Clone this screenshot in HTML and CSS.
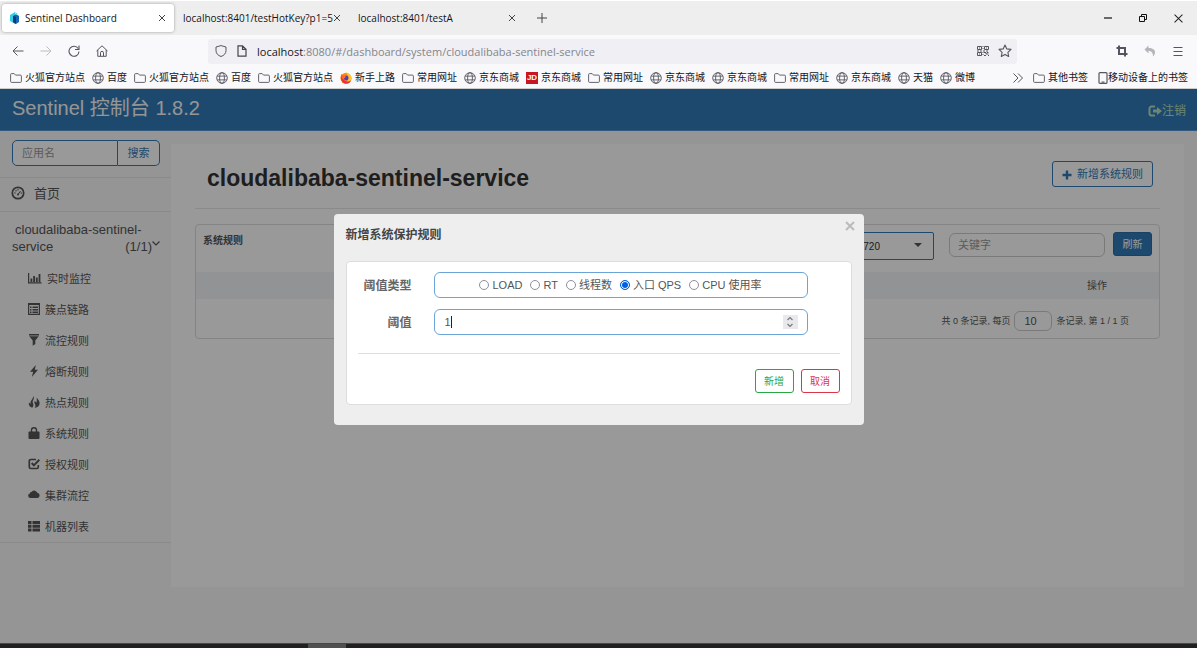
FILE: index.html
```html
<!DOCTYPE html>
<html lang="zh-CN">
<head>
<meta charset="utf-8">
<title>Sentinel Dashboard</title>
<link rel="stylesheet" href="styles.css">
</head>
<body>
<svg class="sprite" aria-hidden="true">
  <symbol id="i-close" viewBox="0 0 8 8"><path d="M1 1l6 6M7 1L1 7" fill="none" stroke="currentColor"/></symbol>
  <symbol id="i-folder" viewBox="0 0 12 12"><path d="M.6 2.6a1 1 0 0 1 1-1h2.6l1.3 1.5h4.9a1 1 0 0 1 1 1v5.3a1 1 0 0 1-1 1H1.6a1 1 0 0 1-1-1z" fill="none" stroke="currentColor" stroke-width=".9"/></symbol>
  <symbol id="i-globe" viewBox="0 0 12 12"><g fill="none" stroke="currentColor" stroke-width=".9"><circle cx="6" cy="6" r="5.3"/><ellipse cx="6" cy="6" rx="2.4" ry="5.3"/><path d="M1.2 4.1h9.6M1.2 7.9h9.6"/></g></symbol>
</svg>

<header class="browser">
  <div class="tabs">
    <div class="tab tab-active">
      <svg class="favicon" viewBox="0 0 10 12"><path d="M0 3l5-3v12L0 9z" fill="#35d0e8"/><path d="M3 4l3-2 3 2v6l-3 2-3-2z" fill="#1765b5"/><path d="M3 4l3 1v7l-3-2z" fill="#0b3a7e"/><path d="M5 0l3 2-2 1z" fill="#56e0e0"/></svg>
      <span class="tab-title">Sentinel Dashboard</span>
      <button class="icon-btn" aria-label="关闭标签页"><svg class="s8"><use href="#i-close"/></svg></button>
    </div>
    <div class="tab">
      <span class="tab-title">localhost:8401/testHotKey?p1=5</span>
      <button class="icon-btn" aria-label="关闭标签页"><svg class="s8"><use href="#i-close"/></svg></button>
    </div>
    <div class="tab">
      <span class="tab-title">localhost:8401/testA</span>
      <button class="icon-btn" aria-label="关闭标签页"><svg class="s8"><use href="#i-close"/></svg></button>
    </div>
    <button class="icon-btn new-tab" aria-label="新标签页"><svg class="s10" viewBox="0 0 10 10"><path d="M5 0v10M0 5h10" stroke="#444" fill="none"/></svg></button>
    <div class="window-controls">
      <button class="icon-btn" aria-label="最小化"><svg class="s8" viewBox="0 0 8 8"><path d="M0 4h8" stroke="#111" stroke-width="1.2"/></svg></button>
      <button class="icon-btn" aria-label="还原"><svg class="s8" viewBox="0 0 8 8"><path d="M.5 2.5h5v5h-5zM2.5 2.500V.5h5v5h-2" stroke="#111" fill="none"/></svg></button>
      <button class="icon-btn" aria-label="关闭"><svg class="s9" viewBox="0 0 8 8"><path d="M.5.5l7 7M7.500.5l-7 7" stroke="#222" stroke-width=".9"/></svg></button>
    </div>
  </div>

  <div class="toolbar">
    <div class="nav-buttons">
      <button class="icon-btn" aria-label="后退"><svg class="s12" viewBox="0 0 12 12"><path d="M11.500 6H1M5.500 1.500L1 6l4.500 4.500" fill="none" stroke="#555560"/></svg></button>
      <button class="icon-btn" aria-label="前进"><svg class="s12" viewBox="0 0 12 12"><path d="M.5 6H11M6.500 1.500L11 6l-4.500 4.500" fill="none" stroke="#bbbbc2"/></svg></button>
      <button class="icon-btn" aria-label="刷新页面"><svg class="s12" viewBox="0 0 12 12"><path d="M10.200 3.500A5 5 0 1 0 11 6.500M11 .5v4H7" fill="none" stroke="#55555f" stroke-width="1.100"/></svg></button>
      <button class="icon-btn" aria-label="主页"><svg class="s12" viewBox="0 0 12 12"><path d="M.5 6L6 .8 11.500 6M1.800 5v6.300h8.400V5M4.500 11V7.800a1.500 1.500 0 0 1 3 0V11" fill="none" stroke="#55555f"/></svg></button>
    </div>
    <div class="address">
      <svg class="s12" viewBox="0 0 12 12"><path d="M6 .6l5 1.400v3.500C11 8.500 9 10.500 6 11.500 3 10.500 1 8.500 1 5.500V2z" fill="none" stroke="#55555f"/></svg>
      <svg class="s12" viewBox="0 0 12 12"><path d="M2 .8h4.500L10 4.200v7H2zM6.500.8v3.500H10" fill="none" stroke="#44444f" stroke-width="1.200"/></svg>
      <span class="url"><b>localhost</b>:8080/#/dashboard/system/cloudalibaba-sentinel-service</span>
      <svg class="s12" viewBox="0 0 12 12"><g fill="none" stroke="#55555f"><path d="M.5 1.500h4v3h-4zM7.500 1.500h4v3h-4zM.5 7.500h4v3h-4zM7 7.500h2v1.500h2.500M7 10.500h2M11 10.500h1"/><path d="M2 3h1M9 3h1M2 9h1M10 7.500h1.500M0 6h12" stroke-dasharray="2 1"/><path d="M6 1v4M6 7v4" stroke-dasharray="1 1"/></g></svg>
      <svg class="s14 star" viewBox="0 0 14 14"><path d="M7 1l1.800 3.900 4.200.5-3.100 2.900.8 4.200L7 10.400l-3.700 2.100.8-4.200L1 5.400l4.200-.5z" fill="none" stroke="#55555f" stroke-width="1.100" stroke-linejoin="round"/></svg>
    </div>
    <div class="tool-buttons">
      <button class="icon-btn" aria-label="截图"><svg class="s12" viewBox="0 0 12 12"><path d="M3 .5V9h8.500M.5 3H9v8.500" fill="none" stroke="#55555f" stroke-width="2"/></svg></button>
      <button class="icon-btn" aria-label="撤销"><svg class="s12" viewBox="0 0 12 12"><path d="M4.500.5L.5 4.500l4 4V6c3 0 4.500 1.500 4.500 5.500C13 7 11 3 4.500 3z" fill="#b5b5bb"/></svg></button>
      <button class="icon-btn" aria-label="菜单"><svg class="s12" viewBox="0 0 12 12"><path d="M1.500 2.500h9M1.500 6.500h9M1.500 10.500h9" stroke="#55555f"/></svg></button>
    </div>
  </div>

  <nav class="bookmarks">
    <a href="#"><svg class="s12"><use href="#i-folder"/></svg>火狐官方站点</a>
    <a href="#"><svg class="s12"><use href="#i-globe"/></svg>百度</a>
    <a href="#"><svg class="s12"><use href="#i-folder"/></svg>火狐官方站点</a>
    <a href="#"><svg class="s12"><use href="#i-globe"/></svg>百度</a>
    <a href="#"><svg class="s12"><use href="#i-folder"/></svg>火狐官方站点</a>
    <a href="#"><svg class="s12" viewBox="0 0 12 12"><circle cx="6" cy="6.300" r="5.500" fill="#ff8a16"/><path d="M6 .5c4 1 6 4 5.300 7C10.500 10.500 8 12 5 11.700 9 10 9 4 6 .5z" fill="#ffc62a"/><path d="M1 3C.2 7 2 11.500 6 11.800c2.500 0 4.500-1.500 5-3.500-3 2.500-8 1-8-3L1 3z" fill="#ee2f3c"/><circle cx="6.200" cy="6" r="2.400" fill="#5b3bb4"/><path d="M1 2l3 1.500 2 .5-1 2-3 1z" fill="#ff6a1a"/></svg>新手上路</a>
    <a href="#"><svg class="s12"><use href="#i-folder"/></svg>常用网址</a>
    <a href="#"><svg class="s12"><use href="#i-globe"/></svg>京东商城</a>
    <a href="#"><span class="jd">JD</span>京东商城</a>
    <a href="#"><svg class="s12"><use href="#i-folder"/></svg>常用网址</a>
    <a href="#"><svg class="s12"><use href="#i-globe"/></svg>京东商城</a>
    <a href="#"><svg class="s12"><use href="#i-globe"/></svg>京东商城</a>
    <a href="#"><svg class="s12"><use href="#i-folder"/></svg>常用网址</a>
    <a href="#"><svg class="s12"><use href="#i-globe"/></svg>京东商城</a>
    <a href="#"><svg class="s12"><use href="#i-globe"/></svg>天猫</a>
    <a href="#"><svg class="s12"><use href="#i-globe"/></svg>微博</a>
    <div class="bookmarks-end">
      <button class="icon-btn" aria-label="更多书签"><svg class="s10" viewBox="0 0 10 10"><path d="M.5.5L5 5 .5 9.500M5 .5L9.500 5 5 9.500" fill="none" stroke="#55555f"/></svg></button>
      <a href="#"><svg class="s12"><use href="#i-folder"/></svg>其他书签</a>
      <a href="#" class="mobile"><svg class="phone" viewBox="0 0 10 12"><path d="M2 .6h6a1 1 0 0 1 1 1v8.800a1 1 0 0 1-1 1H2a1 1 0 0 1-1-1V1.600a1 1 0 0 1 1-1zM3.500 10h3" fill="none" stroke="#55555f" stroke-width="1.200"/></svg>移动设备上的书签</a>
    </div>
  </nav>
</header>

<div class="page">
  <header class="topbar">
    <a class="brand" href="#">Sentinel 控制台 1.8.2</a>
    <a class="logout" href="#"><svg class="s14" viewBox="0 0 14 12"><path d="M7 1.500H3.500a2 2 0 0 0-2 2v5a2 2 0 0 0 2 2H7" fill="none" stroke="currentColor" stroke-width="2"/><path d="M5 4.500h4V2l5 4-5 4V7.500H5z" fill="currentColor"/></svg>注销</a>
  </header>

  <div class="layout">
    <aside class="sidebar">
      <form class="search">
        <input type="text" placeholder="应用名" aria-label="应用名">
        <button type="button">搜索</button>
      </form>
      <a class="home" href="#"><svg class="s14" viewBox="0 0 14 14"><circle cx="7" cy="7" r="5.700" fill="none" stroke="currentColor" stroke-width="1.700"/><path d="M7 8.500L9.500 5" stroke="currentColor"/><circle cx="7" cy="8.500" r="1" fill="currentColor"/><g fill="currentColor"><circle cx="4" cy="7" r=".7"/><circle cx="5" cy="4.700" r=".7"/><circle cx="7" cy="3.800" r=".7"/><circle cx="10.200" cy="7" r=".7"/></g></svg>首页</a>
      <a class="app" href="#">
        <span class="app-first">cloudalibaba-sentinel-</span>
        <span class="app-second"><span>service</span><span class="count">(1/1)<svg class="s8" viewBox="0 0 8 8"><path d="M.5 1.500L4 5l3.500-3.500" fill="none" stroke="currentColor" stroke-width="1.200"/></svg></span></span>
      </a>
      <ul class="menu">
        <li><a href="#"><svg class="s14" viewBox="0 0 14 12"><path d="M.6 1v9.900H13.500" fill="none" stroke="currentColor" stroke-width="1.200"/><path d="M2.500 6.500h1.800V10H2.500zM5.200 4H7v6H5.200zM7.900 5.500h1.800V10H7.900zM10.600 2h1.800v8h-1.800z" fill="currentColor"/></svg>实时监控</a></li>
        <li><a href="#"><svg class="s12" viewBox="0 0 12 12"><path d="M.6.6h10.800v10.800H.6z" fill="none" stroke="currentColor" stroke-width="1.200"/><path d="M0 0h12v2H0zM2 3.500h1.500V5H2zM2 6h1.500v1.500H2zM2 8.500h1.500V10H2zM4.500 3.500H10V5H4.500zM4.500 6H10v1.500H4.500zM4.500 8.500H10V10H4.500z" fill="currentColor"/></svg>簇点链路</a></li>
        <li><a href="#"><svg class="s12" viewBox="0 0 12 12"><path d="M1 0h10v1.500H1zM1.300 2.200h9.400L7.300 6.500v3.600l-2.600 1.600V6.500z" fill="currentColor"/></svg>流控规则</a></li>
        <li><a href="#"><svg class="s12" viewBox="0 0 12 12"><path d="M7.800 0L2 6.800h3.200L3.800 12 10 4.800H6.800z" fill="currentColor"/></svg>熔断规则</a></li>
        <li><a href="#"><svg class="s12" viewBox="0 0 12 12"><path d="M5.200 0c1.200 2 .6 3-.2 4.500C4 6.300 5.400 7.500 5.400 9c0 1-.4 2-1.200 2.800C1.500 11 .3 9 1 6.500L2.500 8C2 4.500 5.200 3.500 5.200 0zM8.500 1.500c2.500 2.500 4 5.500 2.500 8-.7 1.200-2 2.200-4.500 2.300 1.300-1.300 1.200-2.800.3-4C6 6.500 6.500 5.500 7 4.500c.2 1 .7 1.800 1.300 2C9.300 5 8.800 3.500 8.500 1.500z" fill="currentColor"/></svg>热点规则</a></li>
        <li><a href="#"><svg class="s12" viewBox="0 0 12 12"><path d="M3.500 5.500V3.200a2.500 2.500 0 0 1 5 0v2.300" fill="none" stroke="currentColor" stroke-width="1.400"/><rect x=".5" y="4.500" width="11" height="7.500" rx="1" fill="currentColor"/></svg>系统规则</a></li>
        <li><a href="#"><svg class="s12" viewBox="0 0 12 12"><path d="M8 1.500H2.800a1.500 1.500 0 0 0-1.500 1.500v6a1.500 1.500 0 0 0 1.500 1.500h6A1.500 1.500 0 0 0 10.300 9V7" fill="none" stroke="currentColor" stroke-width="1.700"/><path d="M3.700 5l2.200 2.400L11.300 1.800" fill="none" stroke="currentColor" stroke-width="2"/></svg>授权规则</a></li>
        <li><a href="#"><svg class="s12" viewBox="0 0 12 12"><path d="M2.500 9A2.300 2.300 0 0 1 1.800 4.500 2 2 0 0 1 3.800 2.700 3.300 3.300 0 0 1 9.300 3.700 2.700 2.700 0 0 1 9.500 9z" fill="currentColor"/></svg>集群流控</a></li>
        <li><a href="#"><svg class="s12" viewBox="0 0 12 12"><path d="M0 1h3.500v3H0zM4.500 1H12v3H4.500zM0 4.800h3.500v3H0zM4.500 4.800H12v3H4.500zM0 8.600h3.500v3H0zM4.500 8.600H12v3H4.500z" fill="currentColor"/></svg>机器列表</a></li>
      </ul>
    </aside>

    <main class="main">
      <div class="title-row">
        <h1>cloudalibaba-sentinel-service</h1>
        <button class="btn-add" type="button"><svg class="s10" viewBox="0 0 10 10"><path d="M5 .5v9M.5 5h9" stroke="currentColor" stroke-width="2.400"/></svg>新增系统规则</button>
      </div>
      <section class="card">
        <div class="card-head">
          <h2>系统规则</h2>
          <div class="filters">
            <div class="select-wrap">
              <select aria-label="机器"><option>8720</option></select>
              <svg class="s8" viewBox="0 0 8 8"><path d="M0 2h8L4 6z" fill="currentColor"/></svg>
            </div>
            <input type="text" placeholder="关键字" aria-label="关键字">
            <button type="button" class="btn-refresh">刷新</button>
          </div>
        </div>
        <table class="rules"><thead><tr><th>操作</th></tr></thead></table>
        <div class="pager">
          <label for="size">共 0 条记录, 每页</label>
          <input id="size" type="text" value="10">
          <span>条记录, 第 1 / 1 页</span>
        </div>
      </section>
    </main>
  </div>

  <div class="overlay">
    <div class="modal" role="dialog" aria-labelledby="modal-title">
      <button class="icon-btn modal-close" aria-label="关闭"><svg class="s10" viewBox="0 0 10 10"><path d="M1 1l8 8M9 1L1 9" stroke="currentColor" stroke-width="2"/></svg></button>
      <h2 id="modal-title">新增系统保护规则</h2>
      <form class="panel">
        <div class="field">
          <span class="field-label" id="type-label">阈值类型</span>
          <div class="control radios" role="radiogroup" aria-labelledby="type-label">
            <label><input type="radio" name="type">LOAD</label>
            <label><input type="radio" name="type">RT</label>
            <label><input type="radio" name="type">线程数</label>
            <label><input type="radio" name="type" checked>入口 QPS</label>
            <label><input type="radio" name="type">CPU 使用率</label>
          </div>
        </div>
        <div class="field">
          <label class="field-label" for="threshold">阈值</label>
          <div class="control number">
            <input id="threshold" type="number" value="1">
            <span class="caret"></span>
            <span class="spinner"><svg class="s12" viewBox="0 0 12 12"><path d="M3.500 4L6 1.500 8.500 4M3.500 8L6 10.500 8.500 8" fill="none" stroke="#777780" stroke-width="1.200"/></svg></span>
          </div>
        </div>
        <div class="actions">
          <button type="button" class="btn-ok">新增</button>
          <button type="button" class="btn-cancel">取消</button>
        </div>
      </form>
    </div>
  </div>
</div>
<footer class="taskbar"><span></span></footer>
</body>
</html>
```
FILE: styles.css
```css
* { box-sizing: border-box; }
html, body { height: 100%; }
body {
  margin: 0;
  padding: 1px 2px 0 0;
  display: flex;
  flex-direction: column;
  overflow: hidden;
  background: #fff;
  font: 11px/17px "Liberation Sans", "Noto Sans CJK SC", sans-serif;
  color: #555;
}
a { color: inherit; text-decoration: none; }
button, input, select { font: inherit; color: inherit; margin: 0; }
h1, h2, ul { margin: 0; padding: 0; }
svg { flex: none; display: block; }
.sprite { position: absolute; width: 0; height: 0; }
.s8 { width: 8px; height: 8px; }
.s9 { width: 9px; height: 9px; }
.s10 { width: 10px; height: 10px; }
.s12 { width: 12px; height: 12px; }
.s14 { width: 14px; height: 12px; }
.icon-btn { display: flex; padding: 0; border: 0; background: none; color: #444; }

/* Browser chrome */
.browser { flex: none; font-family: "Open Sans", "Noto Sans CJK SC", sans-serif; color: #15141a; }
.tabs { display: flex; align-items: center; height: 34px; padding-left: 2px; background: #eee; }
.tab { display: flex; align-items: center; width: 175px; height: 28px; padding: 0 8px 0 9px; font-size: 10px; }
.tab-active { width: 172px; padding: 0 8px; gap: 5px; background: #fff; border-radius: 3px; box-shadow: 0 0 3px #999; }
.tab-title { flex: 1; white-space: nowrap; overflow: hidden; }
.favicon { width: 10px; height: 12px; }
.new-tab { margin-left: 13px; }
.window-controls { display: flex; align-items: center; gap: 27px; margin-left: auto; padding-right: 14px; }
.toolbar { display: flex; align-items: center; height: 32px; background: #f9f9fb; }
.nav-buttons { display: flex; gap: 16px; width: 208px; padding-left: 12px; }
.address { display: flex; flex: 1; align-items: center; gap: 9px; height: 25px; padding: 0 5px 0 7px; background: #f0f0f4; border-radius: 3px; font-size: 11px; color: #85858c; }
.star { height: 14px; }
.url { flex: 1; white-space: nowrap; }
.url b { font-weight: 400; color: #15141a; }
.tool-buttons { display: flex; gap: 16px; width: 180px; padding-right: 13px; justify-content: flex-end; }
.bookmarks { display: flex; align-items: center; gap: 7px; height: 22px; padding: 0 9px 0 10px; background: #f9f9fb; border-bottom: 1px solid #ccc; font-size: 10px; white-space: nowrap; }
.bookmarks a { display: flex; align-items: center; gap: 3px; }
.bookmarks svg { color: #55555f; }
.jd { width: 12px; height: 12px; background: #c81623; color: #fff; font: bold 8px/12px "Liberation Sans", sans-serif; text-align: center; }
.bookmarks-end { display: flex; align-items: center; gap: 10px; margin-left: auto; }
.bookmarks .mobile { gap: 0; }
.phone { width: 10px; height: 12px; }

/* Application */
.page { position: relative; flex: 1; display: flex; flex-direction: column; min-height: 0; background: #f8f8f8; }
.topbar { flex: none; display: flex; align-items: center; justify-content: space-between; height: 42px; padding: 0 11px 0 12px; background: #337ab7; border-bottom: 1px solid #5596cf; }
.brand { font-size: 20px; line-height: 24px; padding-bottom: 4px; color: #f8f8f8; }
.logout { display: flex; align-items: center; font-size: 12px; padding-top: 4px; color: #b4e0c0; }
.logout svg { margin-bottom: 2px; }
.layout { flex: 1; display: flex; align-items: flex-start; }
.sidebar { flex: none; width: 171px; }
.search { display: flex; height: 46px; padding: 9px 11px 11px 12px; }
.search input { flex: 1; min-width: 0; padding: 1px 9px 0; background: #fff; border: 1px solid #337ab7; border-radius: 5px 0 0 5px; }
.search button { width: 42px; padding: 1px 0 0; background: #fff; border: 1px solid #337ab7; border-left: 0; border-radius: 0 5px 5px 0; color: #337ab7; font-size: 11px; }
input::placeholder { color: #999; }
.home, .app { display: block; border-top: 1px solid #e7e7e7; font-size: 13px; }
.home { display: flex; align-items: center; gap: 9px; height: 34px; padding: 0 0 2px 11px; }
.home svg { height: 14px; margin-bottom: 2px; }
.app { padding: 9px 11px 7px 12px; }
.app-first { display: block; padding-left: 3px; }
.app-second { display: flex; justify-content: space-between; }
.count { display: flex; }
.app svg { margin-top: 2px; }
.menu { list-style: none; border-bottom: 1px solid #e7e7e7; padding-bottom: 1px; }
.menu a { display: flex; align-items: center; gap: 5px; height: 31px; padding: 3px 0 0 28px; }
.menu svg { margin-bottom: 3px; }

.main { flex: 1; height: 443px; margin: 13px 13px 0 0; padding: 0 24px; background: #fff; }
.title-row { display: flex; align-items: center; justify-content: space-between; height: 65px; padding: 0 7px 4px 12px; border-bottom: 1px solid #e7e7e7; }
h1 { font-size: 23px; line-height: 28px; padding-top: 8px; color: #333; }
.btn-add { display: flex; align-items: center; gap: 5px; height: 26px; padding: 1px 9px 0; background: #fff; border: 1px solid #337ab7; border-radius: 3px; color: #337ab7; }
.card { margin-top: 15px; border: 1px solid #ddd; border-radius: 4px; }
.card-head { display: flex; justify-content: space-between; height: 47px; padding: 7px 7px 0; }
.card-head h2 { font-size: 10px; line-height: 18px; }
.filters { display: flex; align-items: flex-start; gap: 8px; }
.select-wrap { position: relative; margin-right: 7px; color: #555; }
.select-wrap select { display: block; width: 140px; height: 28px; padding: 0 53px 0 0; appearance: none; background: #fff; border: 1px solid #337ab7; border-radius: 2px; font-size: 10px; text-align-last: right; color: #333; }
.select-wrap svg { position: absolute; right: 12px; top: 9px; }
.filters input { width: 156px; height: 24px; margin-top: 1px; padding: 0 8px; background: #fff; border: 1px solid #ccc; border-radius: 6px; }
.btn-refresh { width: 39px; height: 24px; padding: 0; background: #337ab7; border: 1px solid #2e6da4; border-radius: 3px; color: #fff; font-size: 10px; }
.rules { width: 100%; border-collapse: collapse; background: #f3f5f9; }
.rules th { height: 27px; padding: 0 52px 0 0; font-size: 10px; font-weight: 400; text-align: right; }
.pager { display: flex; align-items: center; justify-content: flex-end; gap: 4px; height: 39px; padding: 5px 30px 0 0; font-size: 9px; }
.pager input { width: 38px; height: 20px; padding: 0 9px; background: #fff; border: 1px solid #ccc; border-radius: 6px; font-size: 11px; }

/* Dialog */
.overlay { position: absolute; inset: 0; display: flex; justify-content: center; align-items: flex-start; padding-top: 125px; background: rgba(0, 0, 0, .4); }
.modal { position: relative; width: 530px; padding: 12px 12px 20px; background: #eee; border-radius: 4px; }
.modal h2 { font-size: 12px; line-height: 18px; color: #444; }
.modal-close { position: absolute; top: 7px; right: 9px; color: #bbb; }
.panel { margin-top: 17px; padding: 10px 11px 11px; background: #fff; border: 1px solid #ddd; border-radius: 4px; }
.field { display: flex; align-items: center; gap: 22px; margin-bottom: 11px; }
.field-label { width: 54px; font-size: 12px; font-weight: 700; text-align: right; padding-top: 3px; color: #666; }
.control { position: relative; display: flex; align-items: center; flex: 1; height: 26px; margin-right: 32px; border: 1px solid #6ba5d8; border-radius: 6px; background: #fff; }
.radios { justify-content: center; gap: 8px; }
.radios label { display: flex; align-items: center; gap: 3px; }
.radios input { appearance: none; width: 10px; height: 10px; border: 1px solid #8f8f9d; border-radius: 50%; background: #fff; }
.radios input:checked { border: 1px solid #0060df; background: #0060df; box-shadow: inset 0 0 0 1px #fff; }
.number input { flex: 1; height: 24px; padding: 0 10px; border: 0; background: none; outline: 0; appearance: textfield; }
.number input::-webkit-inner-spin-button { appearance: none; }
.caret { position: absolute; left: 16px; top: 6px; width: 1px; height: 12px; background: #222; }
.spinner { display: flex; align-items: center; justify-content: center; width: 15px; height: 14px; margin-right: 9px; background: #e9e9ed; }
.actions { display: flex; justify-content: flex-end; gap: 7px; margin-top: 18px; padding-top: 15px; border-top: 1px solid #ddd; }
.actions button { width: 39px; height: 24px; padding: 0; background: #fff; border: 1px solid; border-radius: 3px; font-size: 10px; }
.actions .btn-ok { color: #28a745; }
.actions .btn-cancel { color: #dc3545; }

.taskbar { flex: none; height: 5px; padding-left: 308px; background: #211f20; border-top: 1px solid #484848; }
.taskbar span { display: block; width: 38px; height: 4px; background: #505050; }
```
